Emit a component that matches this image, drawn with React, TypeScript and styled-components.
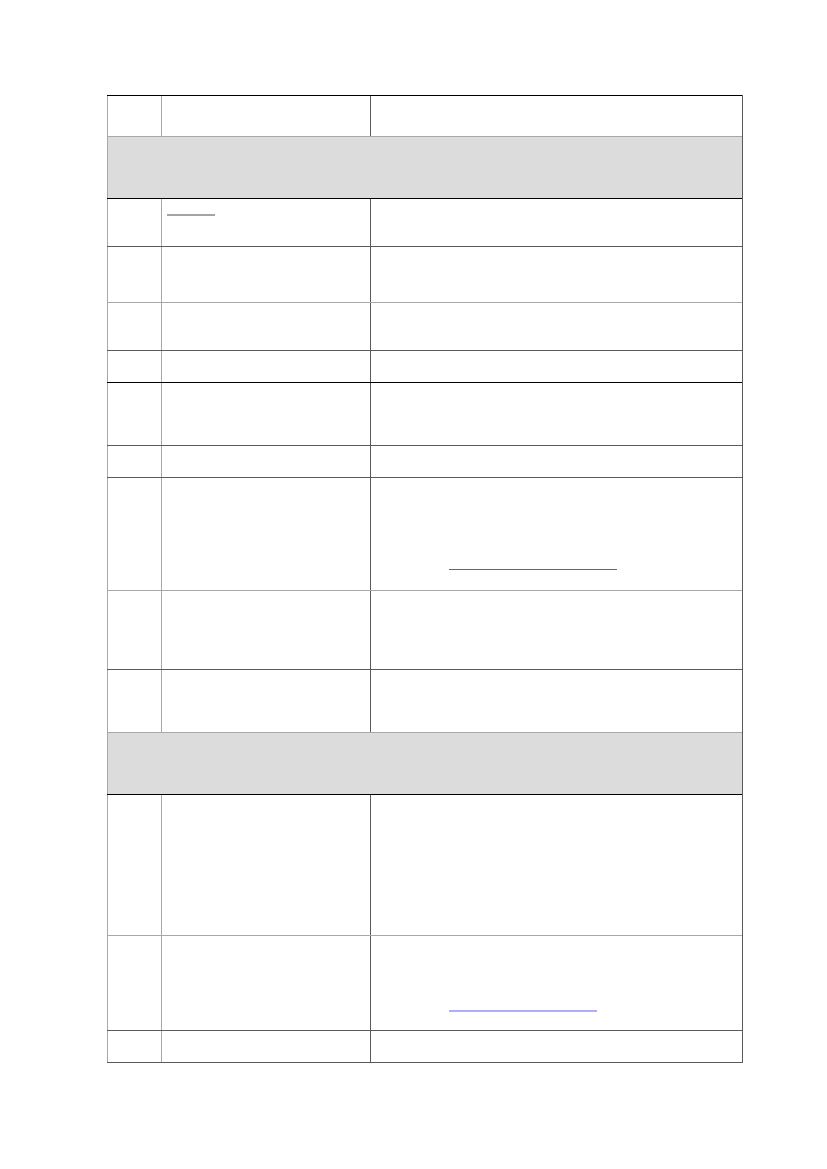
import React from 'react';
import styled, { createGlobalStyle } from 'styled-components';

const GlobalStyle = createGlobalStyle`
  html, body {
    margin: 0;
    padding: 0;
    background: #fff;
    font-family: "Liberation Sans", Arial, sans-serif;
  }
`;

const LINE = {
  black: '#000000',
  dark: '#5a5a5a',
  light: '#a8a8a8',
};

type LineTone = keyof typeof LINE;

const Page = styled.div`
  width: 827px;
  height: 1169px;
  padding: 95px 0 0 107px;
  box-sizing: border-box;
`;

const Table = styled.div`
  width: 636px;
  display: flex;
  flex-direction: column;
  border-right: 1px solid ${LINE.dark};
  border-bottom: 1px solid ${LINE.dark};
  box-sizing: border-box;
`;

const Row = styled.div<{ $h: number; $line: LineTone }>`
  display: grid;
  grid-template-columns: 54px 209px 372px;
  height: ${(p) => p.$h}px;
  border-top: 1px solid ${(p) => LINE[p.$line]};
  box-sizing: border-box;
`;

const Band = styled.div<{ $h: number; $line: LineTone }>`
  height: ${(p) => p.$h}px;
  border-top: 1px solid ${(p) => LINE[p.$line]};
  border-left: 1px solid ${LINE.light};
  background: #dcdcdc;
  box-sizing: border-box;
`;

const Cell = styled.div<{ $edge: LineTone }>`
  border-left: 1px solid ${(p) => LINE[p.$edge]};
  box-sizing: border-box;
`;

const Blank = styled.span<{ $top: number; $left: number; $width: number; $color: string; $thick: number }>`
  display: block;
  margin: ${(p) => p.$top}px 0 0 ${(p) => p.$left}px;
  width: ${(p) => p.$width}px;
  height: 0;
  border-bottom: ${(p) => p.$thick}px solid ${(p) => p.$color};
`;

type Deco = { col: 1 | 2; top: number; left: number; width: number; color: string; thick: number };
type RowDef = { h: number; line: LineTone; band?: boolean; deco?: Deco };

const rows: RowDef[] = [
  { h: 41, line: 'black' },
  { h: 62, line: 'light', band: true },
  { h: 48, line: 'black', deco: { col: 1, top: 15, left: 5, width: 48, color: '#a4a4a4', thick: 2 } },
  { h: 56, line: 'dark' },
  { h: 48, line: 'light' },
  { h: 32, line: 'dark' },
  { h: 63, line: 'black' },
  { h: 32, line: 'dark' },
  { h: 113, line: 'dark', deco: { col: 2, top: 91, left: 78, width: 168, color: '#5656e6', thick: 1 } },
  { h: 79, line: 'light' },
  { h: 63, line: 'dark' },
  { h: 62, line: 'light', band: true },
  { h: 141, line: 'black' },
  { h: 95, line: 'light', deco: { col: 2, top: 74, left: 78, width: 148, color: '#aeaefa', thick: 2 } },
  { h: 32, line: 'dark' },
];

const edges: LineTone[] = ['light', 'light', 'dark'];

const App: React.FC = () => (
  <>
    <GlobalStyle />
    <Page>
      <Table>
        {rows.map((r, i) =>
          r.band ? (
            <Band key={i} $h={r.h} $line={r.line} />
          ) : (
            <Row key={i} $h={r.h} $line={r.line}>
              {edges.map((edge, c) => (
                <Cell key={c} $edge={edge}>
                  {r.deco && r.deco.col === c && (
                    <Blank
                      $top={r.deco.top}
                      $left={r.deco.left}
                      $width={r.deco.width}
                      $color={r.deco.color}
                      $thick={r.deco.thick}
                    />
                  )}
                </Cell>
              ))}
            </Row>
          )
        )}
      </Table>
    </Page>
  </>
);

export default App;
